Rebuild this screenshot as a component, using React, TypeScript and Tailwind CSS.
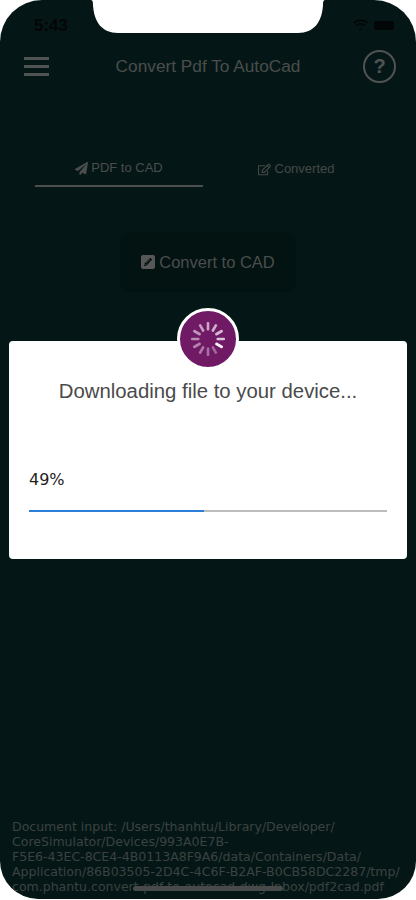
import { FaPaperPlane, FaRegEdit, FaPencilAlt } from 'react-icons/fa'

const spokes = [0, 30, 60, 90, 120, 150, 180, 210, 240, 270, 300, 330]

function Notch() {
  return (
    <svg className="absolute left-[90px] top-0" width="236" height="34" viewBox="0 0 236 34">
      <path
        d="M0 0 H236 C233 0 233 2 233 5 C232 22 224 33 208 33 H28 C12 33 4 22 3 5 C3 2 3 0 0 0 Z"
        fill="#ffffff"
      />
    </svg>
  )
}

function StatusBar() {
  return (
    <div className="flex h-[44px] items-center justify-between pl-[34px] pr-[22px] pt-[6px]">
      <span className="pt-[2px] font-['Liberation_Sans',sans-serif] text-[17px] font-bold text-[#050505]">5:43</span>
      <div className="flex items-center gap-[5px]">
        <svg width="17" height="12" viewBox="0 0 17 12" fill="#020606">
          <path d="M8.5 2.2c2.4 0 4.6.9 6.2 2.5l1.2-1.3A10.6 10.6 0 0 0 8.500.3 10.600 10.600 0 0 0 1.100 3.400l1.200 1.300A8.800 8.800 0 0 1 8.500 2.200z" />
          <path d="M8.500 5.800c1.400 0 2.700.5 3.700 1.500l1.200-1.300a7 7 0 0 0-9.800 0l1.200 1.300c1-1 2.300-1.500 3.700-1.500z" />
          <path d="M8.500 9.200c-.6 0-1.100.2-1.500.6l1.500 1.700 1.500-1.700c-.4-.4-.9-.6-1.500-.6z" />
        </svg>
        <div className="h-[9px] w-[20px] rounded-[2px] bg-[#020606]" />
      </div>
    </div>
  )
}

function Header() {
  return (
    <div className="flex h-[44px] items-center justify-between pl-[24px] pr-[20px]">
      <div className="flex w-[25px] flex-col gap-[5px]">
        <div className="h-[3px] bg-[#505352]" />
        <div className="h-[3px] bg-[#505352]" />
        <div className="h-[3px] bg-[#505352]" />
      </div>
      <span className="ml-[4px] pt-[2px] font-['Liberation_Sans',sans-serif] text-[17.250px] text-[#4a4d4c]">Convert Pdf To AutoCad</span>
      <div className="flex h-[33px] w-[33px] items-center justify-center rounded-full border-[2.500px] border-[#505352]">
        <span className="font-['Liberation_Sans',sans-serif] text-[20px] font-bold text-[#505352]">?</span>
      </div>
    </div>
  )
}

function Tabs() {
  return (
    <div className="mt-[63px] flex pl-[35px] font-['Liberation_Sans',sans-serif] text-[13px]">
      <div className="flex h-[36px] w-[168px] items-center justify-center gap-[3px] border-b-2 border-[#4c4f4e] text-[#4a4d4c]">
        <FaPaperPlane className="h-[13px] w-[13px]" />
        <span>PDF to CAD</span>
      </div>
      <div className="ml-[9px] flex h-[36px] w-[168px] items-center justify-center gap-[4px] text-[#454847]">
        <FaRegEdit className="h-[13px] w-[13px]" />
        <span>Converted</span>
      </div>
    </div>
  )
}

function Spinner() {
  return (
    <div className="absolute left-1/2 top-[-33px] flex h-[62px] w-[62px] -translate-x-1/2 items-center justify-center rounded-full border-[3px] border-white bg-[#701a66]">
      <svg width="36" height="36" viewBox="-18 -18 36 36">
        {spokes.map((a, i) => (
          <rect
            key={a}
            x="-1.300"
            y="-17"
            width="2.600"
            height="8.500"
            rx="1"
            fill="#ffffff"
            opacity={i === 4 ? 0.95 : 0.3 + ((i + 8) % 12) * 0.04}
            transform={`rotate(${a})`}
          />
        ))}
      </svg>
    </div>
  )
}

function ProgressDialog() {
  return (
    <div className="relative mx-[9px] mt-[49px] h-[218px] rounded-[4px] bg-white">
      <Spinner />
      <p className="pt-[37px] text-center font-['Liberation_Sans',sans-serif] text-[20.350px] leading-[26px] text-[#4a4a4a]">
        Downloading file to your device...
      </p>
      <p className="mt-[66px] pl-[20px] font-['DejaVu_Sans',sans-serif] text-[16px] leading-[20px] text-[#222222]">49%</p>
      <div className="mx-[20px] mt-[20px] flex h-[2px] bg-[#bdbdbd]">
        <div className="h-full w-[49%] bg-[#2b7fd6]" />
      </div>
    </div>
  )
}

export default function App() {
  return (
    <div className="relative h-[900px] w-[416px] overflow-hidden bg-white">
      <div className="relative h-[899px] overflow-hidden rounded-b-[38px] rounded-t-[42px] bg-[#041716]">
        <StatusBar />
        <Header />
        <Tabs />
        <div className="mt-[45px] flex justify-center">
          <div className="flex h-[60px] w-[176px] items-center justify-center gap-[4px] rounded-[10px] bg-[#031312] font-['Liberation_Sans',sans-serif] text-[16.500px] text-[#4a4d4c]">
            <span className="flex h-[14px] w-[14px] items-center justify-center rounded-[2px] bg-[#555857]">
              <FaPencilAlt className="h-[8px] w-[8px] text-[#031312]" />
            </span>
            <span>Convert to CAD</span>
          </div>
        </div>
        <ProgressDialog />
        <p className="absolute left-[12px] top-[819px] w-[396px] whitespace-nowrap font-['DejaVu_Sans',sans-serif] text-[12.530px] leading-[15px] text-[#3c4241]">
          Document input: /Users/thanhtu/Library/Developer/
          <br />
          CoreSimulator/Devices/993A0E7B-
          <br />
          F5E6-43EC-8CE4-4B0113A8F9A6/data/Containers/Data/
          <br />
          Application/86B03505-2D4C-4C6F-B2AF-B0CB58DC2287/tmp/
          <br />
          com.phantu.convert-pdf-to-autocad-dwg-Inbox/pdf2cad.pdf
        </p>
        <div className="absolute bottom-[8px] left-[133px] h-[5px] w-[150px] rounded-full bg-[#474a49]" />
      </div>
      <Notch />
    </div>
  )
}
